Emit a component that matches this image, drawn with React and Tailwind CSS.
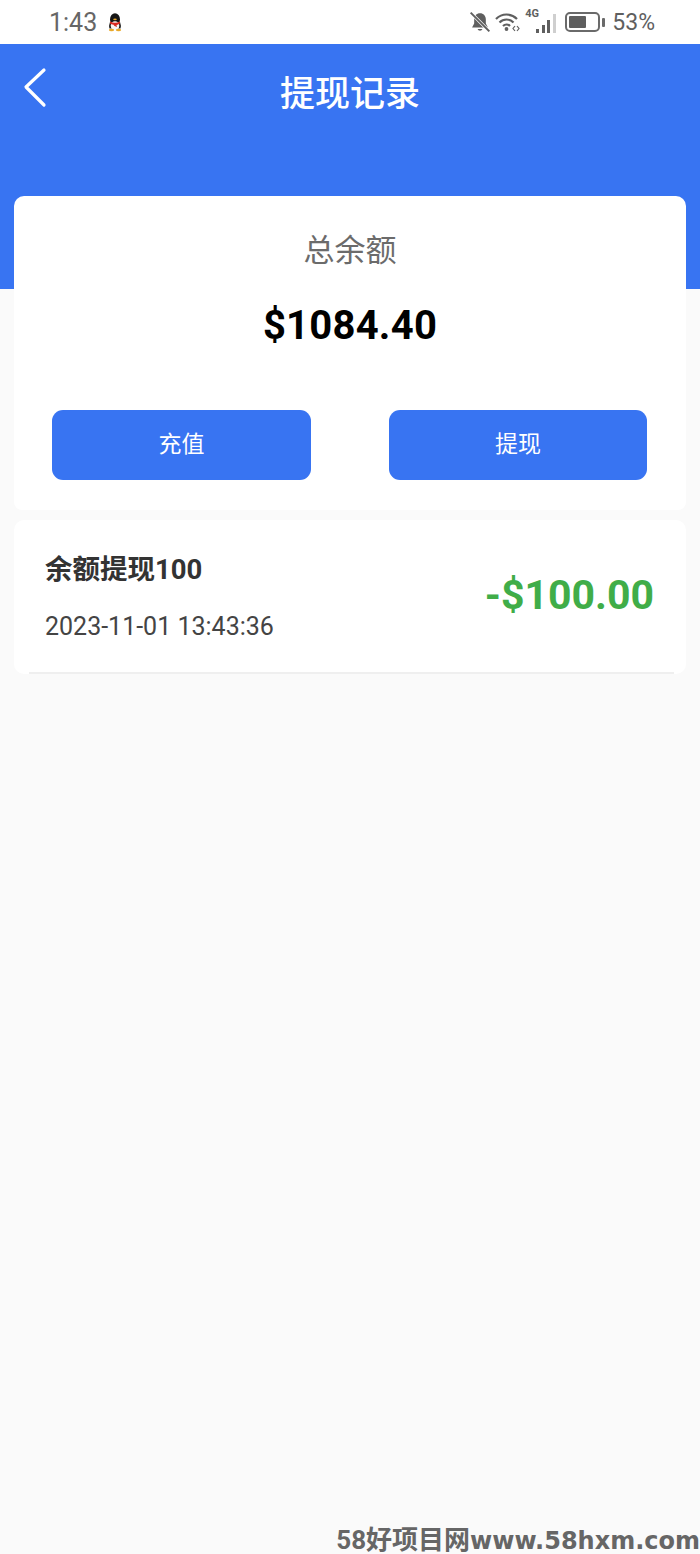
const cjk = '"Roboto", "Noto Sans CJK SC", sans-serif'

function Penguin() {
  return (
    <svg width="16" height="19" viewBox="0 0 16 19">
      <ellipse cx="8" cy="6.500" rx="5" ry="6.300" fill="#161616" />
      <path d="M3 9 Q1.500 13 2.500 15.500 L13.500 15.500 Q14.500 13 13 9Z" fill="#1c1c1c" />
      <ellipse cx="8" cy="12.800" rx="4.300" ry="4.500" fill="#f6f6f6" />
      <path d="M3 8.500 Q8 11 13 8.500 L13 10.500 Q10 12 9.500 12 L10 14 L7.500 13 L6.500 11.800 Q4 11.500 3 10.500Z" fill="#d8281f" />
      <ellipse cx="8" cy="6.300" rx="1.800" ry="0.900" fill="#e9a92a" />
      <ellipse cx="4.500" cy="17" rx="2.600" ry="1.300" fill="#e9a92a" />
      <ellipse cx="11.500" cy="17" rx="2.600" ry="1.300" fill="#e9a92a" />
    </svg>
  )
}

function StatusIcons() {
  return (
    <div className="flex items-center text-[#5f5f5f]">
      {/* muted bell */}
      <svg width="22" height="22" viewBox="0 0 20 20" className="mr-[4px]">
        <path d="M10 2c-3.200 0-5.300 2.400-5.300 5.500v3.800L2.800 15h14.400l-1.900-3.700V7.500C15.300 4.400 13.200 2 10 2z" fill="#5f5f5f" />
        <path d="M7.800 16.300a2.300 2.300 0 0 0 4.400 0z" fill="#5f5f5f" />
        <path d="M2 2l16 16" stroke="#fff" strokeWidth="3" />
        <path d="M1.500 1.500l17 17" stroke="#5f5f5f" strokeWidth="1.800" />
      </svg>
      {/* wifi */}
      <svg width="26" height="20" viewBox="0 0 26 20" fill="none" stroke="#5f5f5f" className="mr-[4px]">
        <path d="M1 7c6-6 15-6 21 0" strokeWidth="2.200" />
        <path d="M4.500 10.500c4-4 10-4 14 0" strokeWidth="2.200" />
        <path d="M8 14c2-2 5-2 7 0" strokeWidth="2.200" />
        <circle cx="11.500" cy="17" r="1.900" fill="#5f5f5f" stroke="none" />
        <path d="M20 14l-2 2.500 2 2.500M22 14l2 2.500-2 2.500" strokeWidth="1.200" />
      </svg>
      {/* 4G + signal */}
      <div className="relative w-[36px] h-[20px]">
        <span className="absolute left-0 top-[-4px] text-[11px] font-bold leading-[12px] [font-family:'Roboto',sans-serif]">4G</span>
        <div className="absolute left-[11px] bottom-[-1px] flex items-end gap-[2.500px]">
          <div className="w-[3px] h-[4px] bg-[#5f5f5f]" />
          <div className="w-[3px] h-[8px] bg-[#5f5f5f]" />
          <div className="w-[3px] h-[13px] bg-[#5f5f5f]" />
          <div className="w-[3px] h-[19px] bg-[#cfcfcf]" />
        </div>
      </div>
      {/* battery */}
      <div className="ml-[4px] flex items-center">
        <div className="w-[35px] h-[20px] rounded-[5px] border-2 border-[#6a6a6a] p-[2px]">
          <div className="w-[17px] h-full rounded-[1px] bg-[#5f5f5f]" />
        </div>
        <div className="ml-[2px] w-[3px] h-[9px] rounded-[1px] bg-[#6a6a6a]" />
      </div>
      <span className="ml-[7px] text-[23px] leading-none">53%</span>
    </div>
  )
}

export default function App() {
  return (
    <div
      className="relative flex flex-col h-[1554px] bg-[#fafafa] overflow-hidden"
      style={{ fontFamily: cjk }}
    >
      {/* Status bar */}
      <div className="h-[44px] bg-white flex items-center justify-between pl-[49px] pr-[45px]">
        <div className="flex items-center gap-[10px] text-[#666]">
          <span className="text-[25px] leading-none">1:43</span>
          <Penguin />
        </div>
        <StatusIcons />
      </div>

      {/* Blue header */}
      <div className="h-[245px] shrink-0 bg-[#3874f2] relative">
        <div className="flex items-center justify-center h-[102px] text-white text-[35px] font-medium">
          提现记录
        </div>
        <svg
          className="absolute left-[22px] top-[22px]"
          width="26"
          height="44"
          viewBox="0 0 26 44"
          fill="none"
          stroke="#fff"
          strokeWidth="3.200"
          strokeLinecap="round"
          strokeLinejoin="round"
        >
          <path d="M22 4 L4 21 L22 39" />
        </svg>
      </div>

      {/* Balance card */}
      <div className="mx-[14px] mt-[-93px] relative z-10 h-[314px] bg-white rounded-t-[10px] rounded-b-[8px] flex flex-col items-center pt-[36px]">
        <div className="text-[31px] leading-[38px] text-[#6b6b6b]">总余额</div>
        <div className="mt-[33px] text-[40px] leading-[46px] font-bold text-black tracking-[0.25px]">$1084.40</div>
        <div className="mt-[61px] w-full pl-[38px] pr-[39px] flex justify-between">
          <button className="w-[259px] h-[70px] rounded-[11px] bg-[#3874f2] text-white text-[23px]">充值</button>
          <button className="w-[258px] h-[70px] rounded-[11px] bg-[#3874f2] text-white text-[23px]">提现</button>
        </div>
      </div>

      {/* Record */}
      <div className="mx-[14px] mt-[10px] h-[154px] bg-white rounded-[10px] relative flex items-center justify-between pl-[31px] pr-[32px]">
        <div>
          <div className="text-[27.500px] leading-[36px] font-bold text-[#333]">余额提现100</div>
          <div className="mt-[23px] text-[25px] leading-[32px] text-[#444]">2023-11-01 13:43:36</div>
        </div>
        <div className="pb-[4px] text-[41px] font-bold leading-none text-[#40ad48]">-$100.00</div>
        <div className="absolute left-[15px] right-[12px] bottom-0 h-[2px] bg-[#efefef]" />
      </div>

      {/* Watermark */}
      <div className="mt-auto self-end flex items-baseline whitespace-nowrap font-bold text-[#666]">
        <span className="text-[26px] leading-[26px] [font-family:'Roboto',sans-serif]">58</span>
        <span className="text-[26px] leading-[26px] [font-family:'Noto_Sans_CJK_SC',sans-serif]">好项目网</span>
        <span className="text-[24px] leading-[26px] [font-family:'DejaVu_Sans',sans-serif]">www.58hxm.com</span>
      </div>
    </div>
  )
}
